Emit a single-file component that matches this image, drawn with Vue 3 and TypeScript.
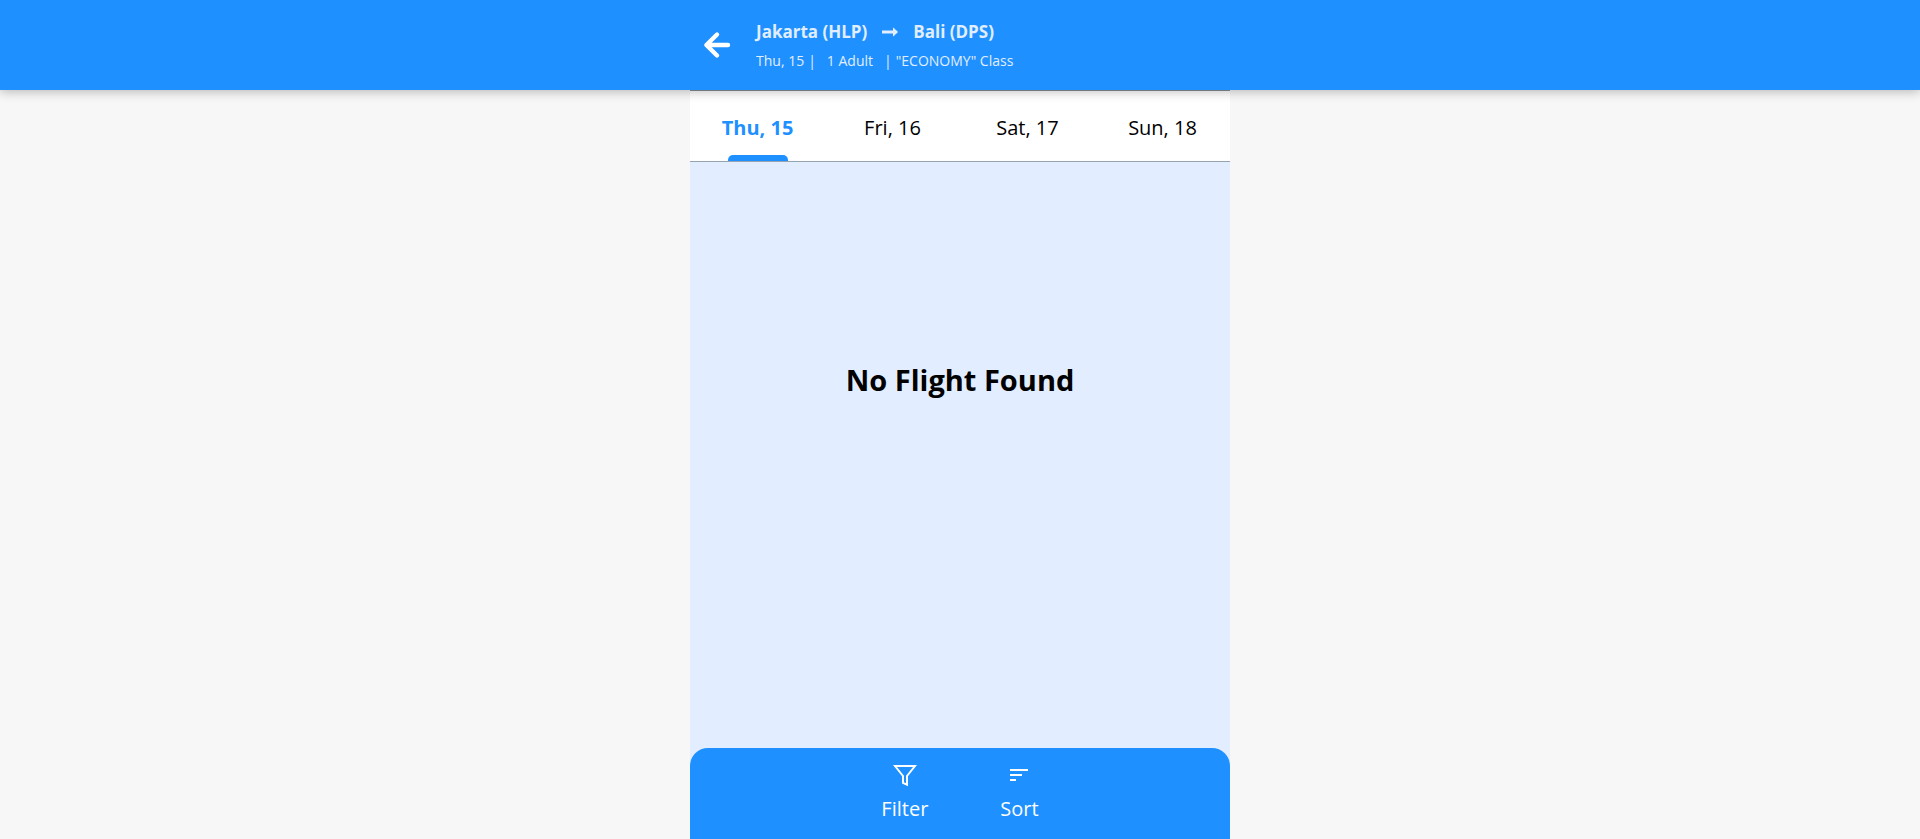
<script setup lang="ts">
import { ref } from 'vue'

const days: string[] = ['Thu, 15', 'Fri, 16', 'Sat, 17', 'Sun, 18']
const selected = ref<string>(days[0])
</script>

<template>
  <div class="page">
    <header class="header">
      <div class="header-inner">
        <button class="back" type="button" aria-label="Back">
          <svg viewBox="0 0 28 28" width="28" height="28" fill="none" stroke="currentColor" stroke-width="4.4" stroke-linecap="round" stroke-linejoin="round">
            <path d="M14 3.5 L3.4 14 L14 24.5" />
            <path d="M4 14 H25" />
          </svg>
        </button>
        <div class="trip">
          <h1 class="route">
            <span>Jakarta (HLP)</span>
            <svg class="arrow" viewBox="0 0 16 10" width="16" height="10" fill="currentColor" aria-hidden="true">
              <path d="M0 3.5 H11 V1.2 Q11 .2 11.8 .9 L15.6 4.4 Q16.2 5 15.6 5.6 L11.8 9.1 Q11 9.8 11 8.8 V6.5 H0 Z" />
            </svg>
            <span>Bali (DPS)</span>
          </h1>
          <p class="details">
            <span class="date">Thu, 15</span>
            <span class="bar">|</span>
            <span class="guests">1 Adult</span>
            <span class="bar">|</span>
            <span class="cabin">"ECONOMY" Class</span>
          </p>
        </div>
      </div>
    </header>

    <main class="results">
      <nav class="days" aria-label="Departure date">
        <button
          v-for="day in days"
          :key="day"
          type="button"
          class="day"
          :class="{ active: day === selected }"
          @click="selected = day"
        >
          {{ day }}
        </button>
      </nav>
      <h2 class="empty">No Flight Found</h2>
      <footer class="tools">
        <button class="tool" type="button">
          <svg viewBox="0 0 24 24" width="24" height="24" fill="none" stroke="currentColor" stroke-width="2" aria-hidden="true">
            <path d="M2 3 H22 L14 13 V21.6 L10 19.8 V13 Z" />
          </svg>
          <span>Filter</span>
        </button>
        <button class="tool" type="button">
          <svg viewBox="0 0 24 24" width="24" height="24" fill="none" stroke="currentColor" stroke-width="2" aria-hidden="true">
            <path d="M3 7 H21 M3 12 H15 M3 17 H9" />
          </svg>
          <span>Sort</span>
        </button>
      </footer>
    </main>
  </div>
</template>

<style>
body {
  margin: 0;
  background: #f7f7f7;
}
</style>

<style scoped>
.page {
  display: flex;
  flex-direction: column;
  min-height: 100vh;
  font-family: "Open Sans", "Noto Sans", sans-serif;
  color: #000;
}

button {
  padding: 0;
  border: 0;
  background: none;
  color: inherit;
  font-family: inherit;
  cursor: pointer;
}

svg {
  display: block;
}

.header {
  position: relative;
  z-index: 1;
  background: #1e90ff;
  box-shadow: 0 2px 10px rgba(0, 0, 0, 0.25);
}

.header-inner {
  display: flex;
  align-items: center;
  gap: 25px;
  box-sizing: border-box;
  width: 100%;
  max-width: 540px;
  height: 90px;
  margin: 0 auto;
  padding: 0 13px;
  color: #fff;
}

.trip {
  padding-top: 2px;
  color: #e1eeff;
}

.route {
  display: flex;
  align-items: center;
  gap: 15px;
  margin: 0;
  font-size: 17px;
  font-weight: 700;
  line-height: 30px;
}

.details {
  display: flex;
  gap: 4px;
  margin: 0;
  font-size: 14px;
  line-height: 28px;
}

.guests {
  margin: 0 7px;
}

.results {
  display: flex;
  flex: 1;
  flex-direction: column;
  width: 100%;
  max-width: 540px;
  margin: 0 auto;
  background: #e2eeff;
}

.days {
  display: grid;
  grid-template-columns: repeat(4, 1fr);
  height: 70px;
  border-top: 1px solid #8a8f94;
  border-bottom: 1px solid #98a3b0;
  background: #fff;
}

.day {
  position: relative;
  padding-top: 2px;
  font-size: 20px;
}

.day.active {
  color: #1e90ff;
  font-weight: 700;
}

.day.active::after {
  content: "";
  position: absolute;
  bottom: 0;
  left: 50%;
  width: 60px;
  height: 6px;
  margin-left: -30px;
  border-radius: 5px 5px 0 0;
  background: #1e90ff;
}

.empty {
  flex: 1;
  margin: 0;
  padding-top: 196px;
  font-size: 29px;
  line-height: 44px;
  text-align: center;
}

.tools {
  display: flex;
  justify-content: center;
  gap: 72px;
  box-sizing: border-box;
  height: 91px;
  padding-top: 15px;
  border-radius: 18px 18px 0 0;
  background: #1e90ff;
  color: #fff;
}

.tool {
  display: flex;
  flex-direction: column;
  align-items: center;
  gap: 8px;
  align-self: flex-start;
  font-size: 20px;
  line-height: 28px;
}
</style>
